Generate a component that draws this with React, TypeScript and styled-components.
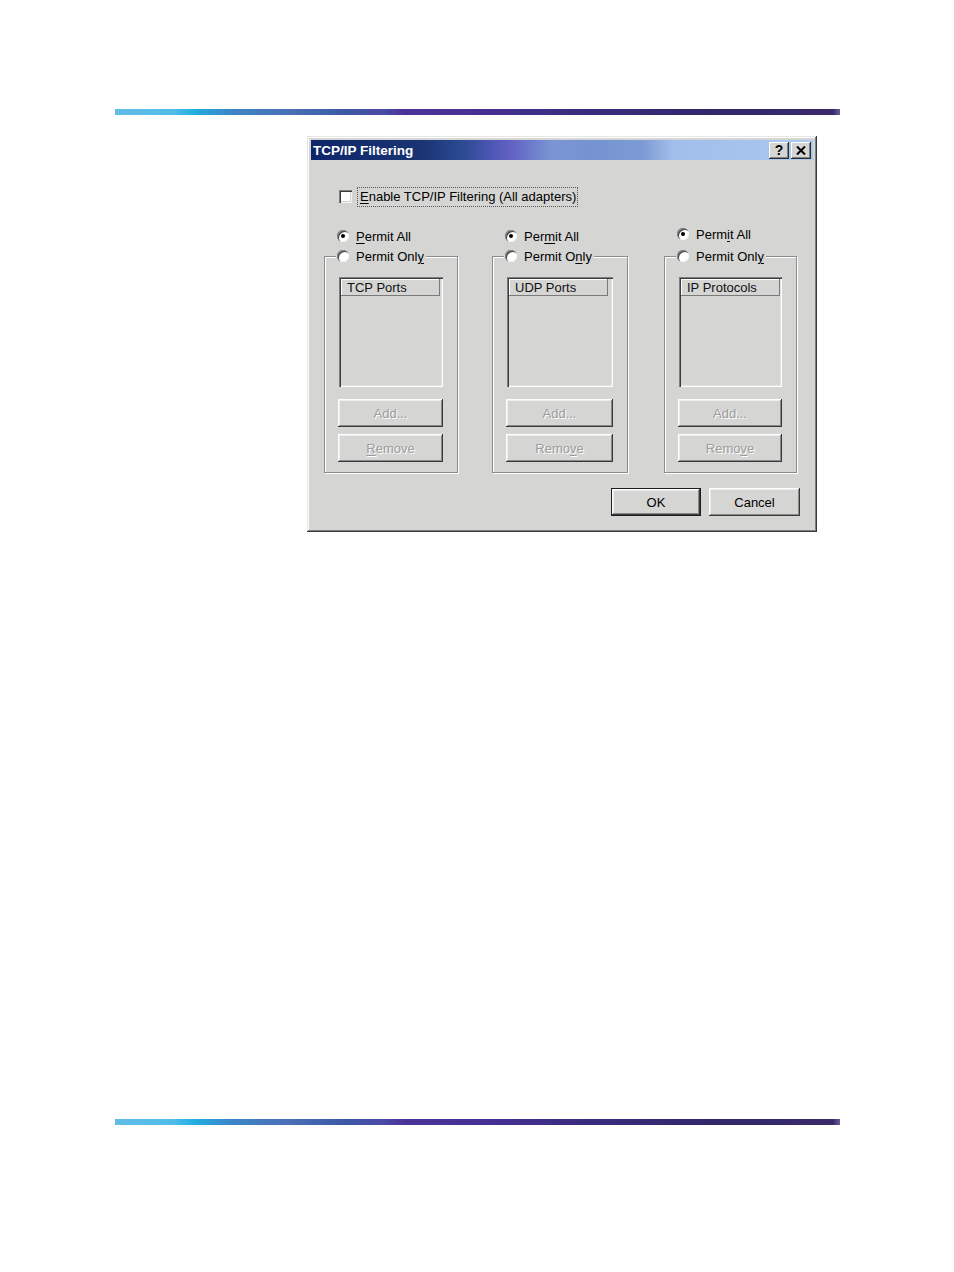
import React from 'react';
import styled, { createGlobalStyle } from 'styled-components';

const GlobalStyle = createGlobalStyle`
  html, body {
    margin: 0;
    padding: 0;
    background: #ffffff;
  }
  body {
    font-family: "Liberation Sans", Arial, sans-serif;
  }
`;

const FACE = '#d5d5d3';

const Page = styled.div`
  width: 954px;
  min-height: 1272px;
  padding-top: 109px;
  box-sizing: border-box;
`;

const Rule = styled.div<{ $gap: number }>`
  margin: ${(p) => p.$gap}px 0 0 115px;
  width: 725px;
  height: 6px;
  background: linear-gradient(
    to right,
    #62bce6 0%,
    #4fbde9 8%,
    #22ade0 11%,
    #3b86c8 16%,
    #4a6fb6 24%,
    #3c5aa8 31%,
    #4a4aa4 37%,
    #4a3398 40%,
    #443092 52%,
    #3a2b7c 66%,
    #31286c 82%,
    #3a2a6a 99%,
    #6a5aa0 100%
  );
`;

const Dialog = styled.div`
  margin: 21px 0 0 307px;
  width: 510px;
  height: 396px;
  box-sizing: border-box;
  padding: 4px;
  background: ${FACE};
  box-shadow: inset -1px -1px 0 #3a3a3a, inset 1px 1px 0 #e6e6e6,
    inset -2px -2px 0 #7e7e7e, inset 2px 2px 0 #ffffff;
  display: flex;
  flex-direction: column;
`;

const TitleBar = styled.div`
  height: 20px;
  display: flex;
  align-items: center;
  padding: 0 2px 0 2px;
  background: linear-gradient(
    to right,
    #0c2669 0%,
    #1a3473 22%,
    #2b4a92 30%,
    #4d56b4 36%,
    #6462c4 40%,
    #6d7ccc 44%,
    #7b95d4 48%,
    #7593d0 56%,
    #7c9ad4 66%,
    #a2bdea 72%,
    #a8c9f0 100%
  );
`;

const Title = styled.span`
  flex: 1;
  color: #ffffff;
  font-weight: bold;
  font-size: 13.5px;
`;

const CaptionButton = styled.div<{ $space?: number }>`
  width: 20px;
  height: 17px;
  margin-left: ${(p) => p.$space ?? 0}px;
  box-sizing: border-box;
  background: ${FACE};
  box-shadow: inset -1px -1px 0 #2e2e2e, inset 1px 1px 0 #ffffff,
    inset -2px -2px 0 #808080;
  display: flex;
  align-items: center;
  justify-content: center;
  font-weight: bold;
  font-size: 14px;
  color: #000;
`;

const Body = styled.div`
  flex: 1;
  display: flex;
  flex-direction: column;
  padding: 27px 0 0 0;
`;

const CheckRow = styled.div`
  display: flex;
  align-items: center;
  height: 19px;
  padding-left: 28px;
  gap: 5px;
`;

const CheckBox = styled.span`
  width: 13px;
  height: 13px;
  box-sizing: border-box;
  background: #ffffff;
  box-shadow: inset 1px 1px 0 #808080, inset 2px 2px 0 #3a3a3a,
    inset -1px -1px 0 #f4f4f4, inset -2px -2px 0 ${FACE};
`;

const FocusLabel = styled.span`
  font-size: 13px;
  color: #000;
  padding: 1px 1px 2px 2px;
  border: 1px dotted #555;
`;

const Key = styled.span`
  text-decoration: underline;
  text-underline-offset: 2px;
`;

const Columns = styled.div`
  display: grid;
  grid-template-columns: 134px 135px 134px;
  column-gap: 35px;
  padding-left: 13px;
  margin-top: 22px;
`;

const Column = styled.div<{ $shift?: number }>`
  display: flex;
  flex-direction: column;
  margin-left: ${(p) => p.$shift ?? 0}px;
`;

const RadioRow = styled.label<{ $lift?: number }>`
  display: flex;
  align-items: center;
  gap: 7px;
  height: 16px;
  padding-left: 13px;
  font-size: 13px;
  color: #000;
  margin-top: ${(p) => -(p.$lift ?? 0)}px;
  margin-bottom: ${(p) => 4 + (p.$lift ?? 0)}px;
`;

const Radio = styled.span<{ $on?: boolean }>`
  position: relative;
  width: 12px;
  height: 12px;
  border-radius: 50%;
  box-sizing: border-box;
  background: #ffffff;
  box-shadow: inset 1px 1px 0 #8a8a8a, inset 2px 2px 0 #4a4a4a,
    inset -1px -1px 0 #f6f6f6;
  &::after {
    content: '';
    display: ${(p) => (p.$on ? 'block' : 'none')};
    position: absolute;
    left: 4px;
    top: 4px;
    width: 4px;
    height: 4px;
    border-radius: 50%;
    background: #000;
  }
`;

const Group = styled.fieldset`
  margin: 0;
  min-width: 0;
  padding: 0 14px 10px 13px;
  border: 1px solid #8c8c8c;
  box-shadow: inset 1px 1px 0 #ffffff, 1px 1px 0 #ffffff;
  display: flex;
  flex-direction: column;
`;

const Legend = styled.legend`
  margin-left: -2px;
  padding: 0 2px 0 1px;
  background: ${FACE};
`;

const LegendRow = styled.span`
  display: flex;
  align-items: center;
  gap: 7px;
  height: 16px;
  font-size: 13px;
  color: #000;
`;

const ListBox = styled.div`
  margin: 13px 0 0 1px;
  height: 110px;
  box-sizing: border-box;
  padding: 2px 0 0 2px;
  background: ${FACE};
  box-shadow: inset 1px 1px 0 #7e7e7e, inset 2px 2px 0 #3c3c3c,
    inset -1px -1px 0 #ffffff, inset -2px -2px 0 #e2e2e2;
`;

const ListHeader = styled.div`
  width: 99px;
  height: 17px;
  box-sizing: border-box;
  padding-left: 6px;
  display: flex;
  align-items: center;
  font-size: 13px;
  color: #111;
  box-shadow: inset -1px -1px 0 #7a7a7a, inset 1px 1px 0 #ffffff;
`;

const Button = styled.div<{ $gap: number; $disabled?: boolean; $default?: boolean }>`
  margin-top: ${(p) => p.$gap}px;
  height: 28px;
  box-sizing: border-box;
  display: flex;
  align-items: center;
  justify-content: center;
  font-size: 13px;
  background: ${FACE};
  color: ${(p) => (p.$disabled ? '#9c9c9c' : '#000')};
  text-shadow: ${(p) => (p.$disabled ? '1px 1px 0 #ffffff' : 'none')};
  border: ${(p) => (p.$default ? '1px solid #1e1e1e' : '0')};
  box-shadow: inset -1px -1px 0 #3a3a3a, inset 1px 1px 0 #ffffff,
    inset -2px -2px 0 #8a8a8a, inset 2px 2px 0 #ececec;
`;

const Footer = styled.div`
  display: flex;
  justify-content: flex-end;
  gap: 8px;
  padding-right: 13px;
  margin-top: 15px;
`;

const FooterButton = styled(Button)<{ $w: number }>`
  width: ${(p) => p.$w}px;
  margin-top: 0;
`;

const CloseGlyph = () => (
  <svg width="10" height="9" viewBox="0 0 10 9">
    <path d="M1 0.5 L9 8.5 M9 0.5 L1 8.5" stroke="#000" strokeWidth="2" />
  </svg>
);

type Col = {
  all: React.ReactNode;
  only: React.ReactNode;
  header: string;
  remove: React.ReactNode;
  lift?: number;
  shift?: number;
};

const columns: Col[] = [
  {
    all: (<><Key>P</Key>ermit All</>),
    only: (<>Permit Onl<Key>y</Key></>),
    header: 'TCP Ports',
    remove: (<><Key>R</Key>emove</>),
  },
  {
    all: (<>Per<Key>m</Key>it All</>),
    only: (<>Permit O<Key>n</Key>ly</>),
    header: 'UDP Ports',
    remove: (<>Remo<Key>v</Key>e</>),
    shift: -1,
  },
  {
    all: (<>Perm<Key>i</Key>t All</>),
    only: (<>Permit Onl<Key>y</Key></>),
    header: 'IP Protocols',
    remove: (<>Remo<Key>v</Key>e</>),
    lift: 2,
    shift: 1,
  },
];

export default function App() {
  return (
    <>
      <GlobalStyle />
      <Page>
        <Rule $gap={0} />
        <Dialog>
          <TitleBar>
            <Title>TCP/IP Filtering</Title>
            <CaptionButton>?</CaptionButton>
            <CaptionButton $space={2}>
              <CloseGlyph />
            </CaptionButton>
          </TitleBar>
          <Body>
            <CheckRow>
              <CheckBox />
              <FocusLabel>
                <Key>E</Key>nable TCP/IP Filtering (All adapters)
              </FocusLabel>
            </CheckRow>
            <Columns>
              {columns.map((c) => (
                <Column key={c.header} $shift={c.shift}>
                  <RadioRow $lift={c.lift}>
                    <Radio $on />
                    <span>{c.all}</span>
                  </RadioRow>
                  <Group>
                    <Legend>
                      <LegendRow>
                        <Radio />
                        <span>{c.only}</span>
                      </LegendRow>
                    </Legend>
                    <ListBox>
                      <ListHeader>{c.header}</ListHeader>
                    </ListBox>
                    <Button $gap={12} $disabled>
                      Add...
                    </Button>
                    <Button $gap={7} $disabled>
                      {c.remove}
                    </Button>
                  </Group>
                </Column>
              ))}
            </Columns>
            <Footer>
              <FooterButton $w={90} $gap={0} $default>
                OK
              </FooterButton>
              <FooterButton $w={91} $gap={0}>
                Cancel
              </FooterButton>
            </Footer>
          </Body>
        </Dialog>
        <Rule $gap={587} />
      </Page>
    </>
  );
}
